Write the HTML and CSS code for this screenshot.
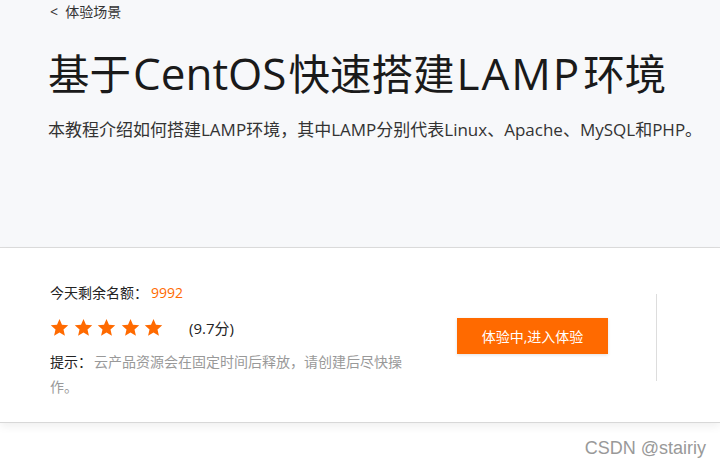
FILE: index.html
```html
<!DOCTYPE html>
<html lang="zh-CN">
<head>
<meta charset="utf-8">
<link rel="stylesheet" href="styles.css">
</head>
<body>
<header class="hero">
  <div class="back">&lt;&nbsp; 体验场景</div>
  <h1 class="title">基于<span class="lat">CentOS</span>快速搭建<span class="lat wide">LAMP</span>环境</h1>
  <p class="desc">本教程介绍如何搭建LAMP环境，其中LAMP分别代表Linux、Apache、MySQL和PHP。</p>
</header>
<section class="card">
  <div class="info">
    <div class="quota">今天剩余名额：<span class="num">9992</span></div>
    <div class="rating">
      <div class="stars">
        <svg viewBox="0 0 20 20"><path d="M10 1l2.6 6.1 6.6.6-5 4.4 1.5 6.5L10 15.2 4.3 18.6l1.5-6.5-5-4.4 6.6-.6z"/></svg>
        <svg viewBox="0 0 20 20"><path d="M10 1l2.6 6.1 6.6.6-5 4.4 1.5 6.5L10 15.2 4.3 18.6l1.5-6.5-5-4.4 6.6-.6z"/></svg>
        <svg viewBox="0 0 20 20"><path d="M10 1l2.6 6.1 6.6.6-5 4.4 1.5 6.5L10 15.2 4.3 18.6l1.5-6.5-5-4.4 6.6-.6z"/></svg>
        <svg viewBox="0 0 20 20"><path d="M10 1l2.6 6.1 6.6.6-5 4.4 1.5 6.5L10 15.2 4.3 18.6l1.5-6.5-5-4.4 6.6-.6z"/></svg>
        <svg viewBox="0 0 20 20"><path d="M10 1l2.6 6.1 6.6.6-5 4.4 1.5 6.5L10 15.2 4.3 18.6l1.5-6.5-5-4.4 6.6-.6z"/></svg>
      </div>
      <span class="score">(9.7分)</span>
    </div>
    <p class="tip"><span class="tip-label">提示：</span>云产品资源会在固定时间后释放，请创建后尽快操作。</p>
  </div>
  <div class="action">
    <button class="btn">体验中,进入体验</button>
  </div>
  <div class="divider"></div>
</section>
<footer class="bottom">
  <span class="mark">CSDN @stairiy</span>
</footer>
</body>
</html>
```
FILE: styles.css
```css
* { box-sizing: border-box; }
html, body { margin: 0; padding: 0; }
body {
  width: 720px;
  height: 469px;
  overflow: hidden;
  font-family: "Open Sans", "Noto Sans CJK SC", sans-serif;
  color: #222;
  background: #fff;
}
.hero {
  height: 248px;
  background: #f7f8fa;
  border-bottom: 1px solid #dcdcdc;
  padding: 2px 0 0 48px;
}
.back {
  font-size: 14px;
  line-height: 20px;
  color: #333;
  padding-left: 2px;
}
.title {
  margin: 24px 0 0 0;
  font-size: 41.5px;
  font-weight: 400;
  line-height: 54px;
  color: #1a1a1a;
  white-space: nowrap;
}
.lat { font-size: 44px; padding: 0 2px; }
.wide { letter-spacing: 2px; }
.desc {
  margin: 18px 0 0 0;
  font-size: 17px;
  line-height: 22px;
  color: #333;
  white-space: nowrap;
}
.card {
  height: 175px;
  background: #fff;
  border-bottom: 1px solid #d8d8d8;
  box-shadow: 0 4px 8px rgba(0,0,0,0.06);
  display: flex;
  align-items: flex-start;
  padding: 36px 0 0 50px;
}
.info { width: 365px; }
.quota {
  font-size: 14px;
  line-height: 18px;
  color: #222;
}
.num { color: #ff6a00; margin-left: 3px; }
.rating {
  display: flex;
  align-items: center;
  margin-top: 14px;
  height: 22px;
}
.stars { display: flex; gap: 4.5px; }
.stars svg { width: 19px; height: 19px; fill: #ff6a00; display: block; }
.score {
  margin-left: 26px;
  font-size: 15px;
  color: #222;
}
.tip {
  width: 362px;
  margin: 11px 0 0 0;
  font-size: 14px;
  line-height: 25px;
  color: #999;
}
.tip-label { display: inline-block; color: #222; margin-right: 2px; }
.action {
  margin-left: 42px;
  padding-top: 34px;
}
.btn {
  width: 151px;
  height: 36px;
  border: 0;
  background: #ff6a00;
  color: #fff;
  font-family: inherit;
  font-size: 14px;
  box-shadow: 0 1px 3px rgba(0,0,0,0.12);
  padding: 0;
}
.divider {
  margin-left: 48px;
  margin-top: 10px;
  width: 1px;
  height: 87px;
  background: #ddd;
}
.bottom {
  height: 46px;
  display: flex;
  justify-content: flex-end;
  align-items: flex-start;
  padding: 14px 14px 0 0;
}
.mark {
  font-family: "Liberation Sans", sans-serif;
  font-size: 18px;
  line-height: 22px;
  color: #999;
}
```
